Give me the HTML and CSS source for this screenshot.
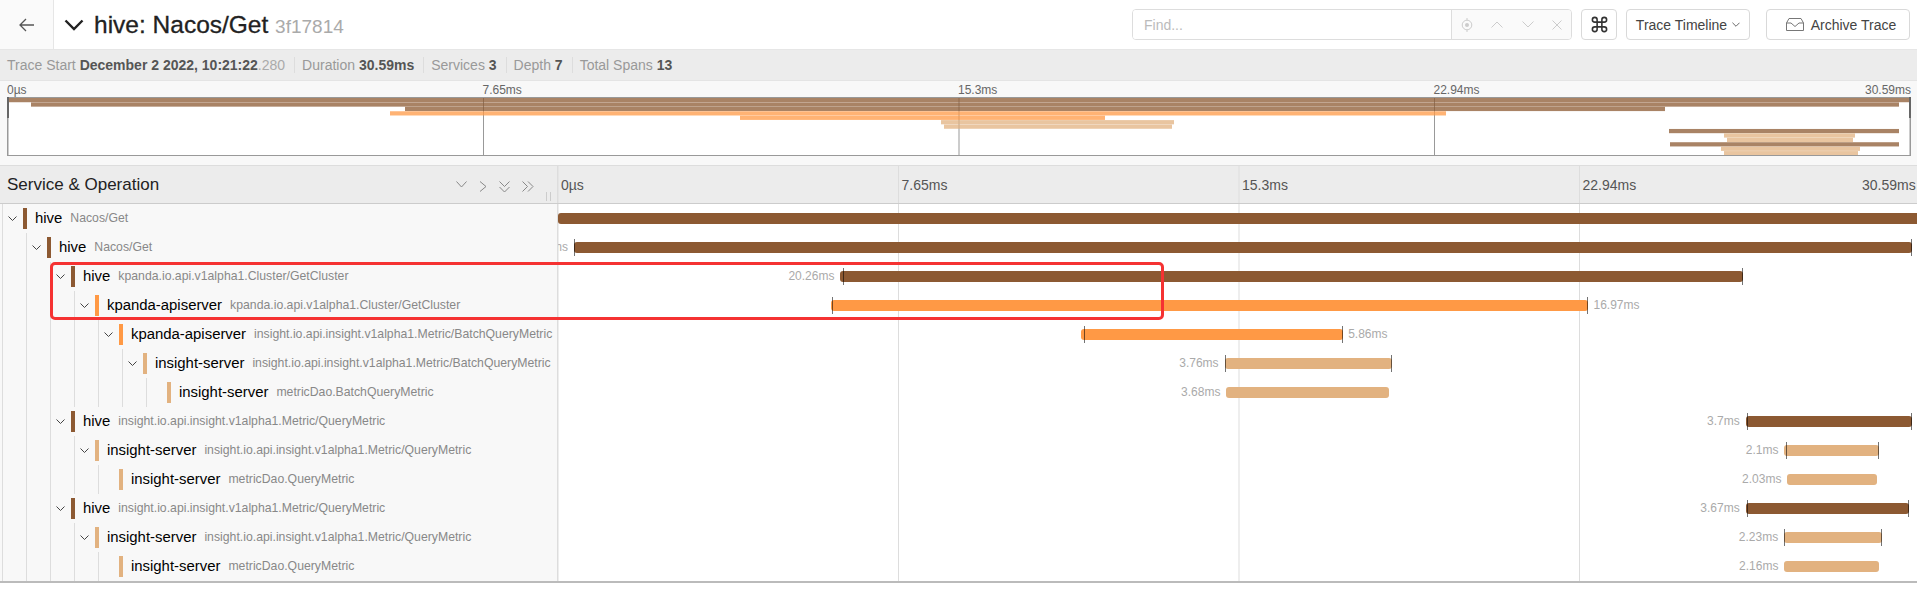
FILE: index.html
```html
<!DOCTYPE html>
<html lang="en">
<head>
  <meta charset="UTF-8" />
  <meta name="viewport" content="width=device-width, initial-scale=1.0" />
  <title>hive: Nacos/Get</title>
  <link rel="stylesheet" href="styles.css">
</head>
<body>
  <svg class="defs" width="0" height="0">
    <symbol id="chev" viewBox="0 0 9 5"><path d="M.5.5 4.5 4.5 8.5.5" fill="none" stroke="currentColor" stroke-width="1"/></symbol>
  </svg>

  <header id="topbar">
    <a class="back-btn">
      <svg width="16" height="14" viewBox="0 0 16 14"><path d="M7 1 1 7l6 6M1 7h14" fill="none" stroke="#555" stroke-width="1.3"/></svg>
    </a>
    <svg class="title-chev" width="20" height="12" viewBox="0 0 20 12"><path d="M1.5 1.5 10 10l8.5-8.5" fill="none" stroke="#222" stroke-width="2.4"/></svg>
    <h1 class="trace-title">hive: Nacos/Get <small>3f17814</small></h1>

    <div class="find-group">
      <input class="find-input" placeholder="Find...">
      <div class="find-icons">
        <svg width="12" height="16" viewBox="0 0 12 16"><circle cx="6" cy="8" r="4.8" fill="none" stroke="#ccc"/><circle cx="6" cy="8" r="2" fill="#ccc"/><path d="M6 1v2M6 13v2" stroke="#ccc"/></svg>
        <svg width="12" height="7" viewBox="0 0 12 7"><path d="M.5 6.5 6 1l5.500 5.500" fill="none" stroke="#ccc"/></svg>
        <svg width="12" height="7" viewBox="0 0 12 7"><path d="M.5.5 6 6 11.500.5" fill="none" stroke="#ccc"/></svg>
        <svg width="10" height="10" viewBox="0 0 10 10"><path d="M.5.5l9 9M9.500.5l-9 9" fill="none" stroke="#ccc"/></svg>
      </div>
    </div>
    <button class="btn cmd-btn">
      <svg width="19" height="19" viewBox="0 0 24 24"><path d="M18 3a3 3 0 0 0-3 3v12a3 3 0 0 0 3 3 3 3 0 0 0 3-3 3 3 0 0 0-3-3H6a3 3 0 0 0-3 3 3 3 0 0 0 3 3 3 3 0 0 0 3-3V6a3 3 0 0 0-3-3 3 3 0 0 0-3 3 3 3 0 0 0 3 3h12a3 3 0 0 0 3-3 3 3 0 0 0-3-3z" fill="none" stroke="#333" stroke-width="2"/></svg>
    </button>
    <button class="btn view-btn">Trace Timeline
      <svg width="8" height="5" class="view-chev"><use href="#chev"/></svg>
    </button>
    <button class="btn archive-btn">
      <svg width="18" height="13" viewBox="0 0 18 13"><path d="M3 .5H15L17.500 5V12.500H.5V5ZM.5 5H5L9 8.500 13 5H17.500" fill="none" stroke="#777"/></svg>
      Archive Trace
    </button>
  </header>

  <div id="meta-bar">
    <span class="meta-item">Trace Start <b>December 2 2022, 10:21:22</b><span class="ms">.280</span></span>
    <span class="meta-item">Duration <b>30.59ms</b></span>
    <span class="meta-item">Services <b>3</b></span>
    <span class="meta-item">Depth <b>7</b></span>
    <span class="meta-item">Total Spans <b>13</b></span>
  </div>

  <section id="minimap">
    <div class="mini-ticks">
      <span>0µs</span><span>7.65ms</span><span>15.3ms</span><span>22.94ms</span><span class="last">30.59ms</span>
    </div>
    <div class="mini-canvas">
      <svg width="100%" height="100%" viewBox="0 0 1902 58" preserveAspectRatio="none">
        <g class="mini-bars">
          <rect class="c-hive" x="0" y="0" width="1902" height="4.300"/>
          <rect class="c-hive" x="23" y="4.500" width="1868" height="4.300"/>
          <rect class="c-hive" x="397" y="9" width="1260" height="4.300"/>
          <rect class="c-kpanda" x="382" y="13.500" width="1056" height="4.300"/>
          <rect class="c-kpanda" x="732" y="18" width="365" height="4.300"/>
          <rect class="c-insight" x="933" y="22.500" width="233" height="4.300"/>
          <rect class="c-insight" x="936" y="27" width="228" height="4.300"/>
          <rect class="c-hive" x="1661" y="31.500" width="230" height="4.300"/>
          <rect class="c-insight" x="1716" y="36" width="131" height="4.300"/>
          <rect class="c-insight" x="1719" y="40.500" width="126" height="4.300"/>
          <rect class="c-hive" x="1662" y="45" width="229" height="4.300"/>
          <rect class="c-insight" x="1713" y="49.500" width="139" height="4.300"/>
          <rect class="c-insight" x="1716" y="54" width="134" height="4"/>
        </g>
      </svg>
      <i class="handle handle-left"></i>
      <i class="handle handle-right"></i>
    </div>
  </section>

  <main id="trace">
    <div class="table-head">
      <div class="name-col head-name">
        <span>Service &amp; Operation</span>
        <div class="collapse-icons">
          <svg width="11" height="7" viewBox="0 0 11 7"><path d="M.5.5l5 5.500 5-5.500" fill="none" stroke="#888"/></svg>
          <svg width="8" height="11" viewBox="0 0 8 11"><path d="M1 .5l6 5-6 5" fill="none" stroke="#888"/></svg>
          <svg width="11" height="12" viewBox="0 0 11 12"><path d="M.5.5l5 5 5-5M.5 6l5 5 5-5" fill="none" stroke="#888"/></svg>
          <svg width="12" height="11" viewBox="0 0 12 11"><path d="M.5.5l5 5-5 5M6 .5l5 5-5 5" fill="none" stroke="#888"/></svg>
        </div>
        <i class="drag-grip"></i>
      </div>
      <div class="time-col head-ticks">
        <span>0µs</span><span>7.65ms</span><span>15.3ms</span><span>22.94ms</span><span class="last">30.59ms</span>
      </div>
    </div>

    <div class="rows">
      <div class="row">
        <div class="name-col">
          <i class="guide last"><svg class="chev" width="9" height="5"><use href="#chev"/></svg></i>
          <i class="svc-mark c-hive"></i><span class="svc">hive</span><span class="op">Nacos/Get</span>
        </div>
        <div class="time-col"><div class="track">
          <div class="bar c-hive" style="left:0;width:100%"><i class="tick" style="left:-1px"></i></div>
        </div></div>
      </div>

      <div class="row">
        <div class="name-col">
          <i class="guide"></i><i class="guide last"><svg class="chev" width="9" height="5"><use href="#chev"/></svg></i>
          <i class="svc-mark c-hive"></i><span class="svc">hive</span><span class="op">Nacos/Get</span>
        </div>
        <div class="time-col"><div class="track">
          <div class="bar c-hive" style="left:1.17%;width:98.21%"><span class="dur before">30.2ms</span><i class="tick" style="left:0"></i><i class="tick end"></i></div>
        </div></div>
      </div>

      <div class="row">
        <div class="name-col">
          <i class="guide"></i><i class="guide"></i><i class="guide last"><svg class="chev" width="9" height="5"><use href="#chev"/></svg></i>
          <i class="svc-mark c-hive"></i><span class="svc">hive</span><span class="op">kpanda.io.api.v1alpha1.Cluster/GetCluster</span>
        </div>
        <div class="time-col"><div class="track">
          <div class="bar c-hive" style="left:20.74%;width:66.23%"><span class="dur before">20.26ms</span><i class="tick" style="left:3px"></i><i class="tick end"></i></div>
        </div></div>
      </div>

      <div class="row">
        <div class="name-col">
          <i class="guide"></i><i class="guide"></i><i class="guide"></i><i class="guide last"><svg class="chev" width="9" height="5"><use href="#chev"/></svg></i>
          <i class="svc-mark c-kpanda"></i><span class="svc">kpanda-apiserver</span><span class="op">kpanda.io.api.v1alpha1.Cluster/GetCluster</span>
        </div>
        <div class="time-col"><div class="track">
          <div class="bar c-kpanda" style="left:20.04%;width:55.62%"><i class="tick" style="left:1px"></i><i class="tick end"></i><span class="dur after">16.97ms</span></div>
        </div></div>
      </div>

      <div class="row">
        <div class="name-col">
          <i class="guide"></i><i class="guide"></i><i class="guide"></i><i class="guide"></i><i class="guide last"><svg class="chev" width="9" height="5"><use href="#chev"/></svg></i>
          <i class="svc-mark c-kpanda"></i><span class="svc">kpanda-apiserver</span><span class="op">insight.io.api.insight.v1alpha1.Metric/BatchQueryMetric</span>
        </div>
        <div class="time-col"><div class="track">
          <div class="bar c-kpanda" style="left:38.37%;width:19.28%"><i class="tick" style="left:3px"></i><i class="tick end"></i><span class="dur after">5.86ms</span></div>
        </div></div>
      </div>

      <div class="row">
        <div class="name-col">
          <i class="guide"></i><i class="guide"></i><i class="guide"></i><i class="guide"></i><i class="guide"></i><i class="guide last"><svg class="chev" width="9" height="5"><use href="#chev"/></svg></i>
          <i class="svc-mark c-insight"></i><span class="svc">insight-server</span><span class="op">insight.io.api.insight.v1alpha1.Metric/BatchQueryMetric</span>
        </div>
        <div class="time-col"><div class="track">
          <div class="bar c-insight" style="left:48.94%;width:12.3%"><span class="dur before">3.76ms</span><i class="tick" style="left:0"></i><i class="tick end"></i></div>
        </div></div>
      </div>

      <div class="row">
        <div class="name-col">
          <i class="guide"></i><i class="guide"></i><i class="guide"></i><i class="guide"></i><i class="guide"></i><i class="guide"></i><i class="guide last"></i>
          <i class="svc-mark c-insight"></i><span class="svc">insight-server</span><span class="op">metricDao.BatchQueryMetric</span>
        </div>
        <div class="time-col"><div class="track">
          <div class="bar c-insight" style="left:49.08%;width:11.96%"><span class="dur before">3.68ms</span></div>
        </div></div>
      </div>

      <div class="row">
        <div class="name-col">
          <i class="guide"></i><i class="guide"></i><i class="guide last"><svg class="chev" width="9" height="5"><use href="#chev"/></svg></i>
          <i class="svc-mark c-hive"></i><span class="svc">hive</span><span class="op">insight.io.api.insight.v1alpha1.Metric/QueryMetric</span>
        </div>
        <div class="time-col"><div class="track">
          <div class="bar c-hive" style="left:87.2%;width:12.18%"><span class="dur before">3.7ms</span><i class="tick" style="left:1px"></i><i class="tick end"></i></div>
        </div></div>
      </div>

      <div class="row">
        <div class="name-col">
          <i class="guide"></i><i class="guide"></i><i class="guide"></i><i class="guide last"><svg class="chev" width="9" height="5"><use href="#chev"/></svg></i>
          <i class="svc-mark c-insight"></i><span class="svc">insight-server</span><span class="op">insight.io.api.insight.v1alpha1.Metric/QueryMetric</span>
        </div>
        <div class="time-col"><div class="track">
          <div class="bar c-insight" style="left:90.05%;width:6.91%"><span class="dur before">2.1ms</span><i class="tick" style="left:2px"></i><i class="tick end"></i></div>
        </div></div>
      </div>

      <div class="row">
        <div class="name-col">
          <i class="guide"></i><i class="guide"></i><i class="guide"></i><i class="guide"></i><i class="guide last"></i>
          <i class="svc-mark c-insight"></i><span class="svc">insight-server</span><span class="op">metricDao.QueryMetric</span>
        </div>
        <div class="time-col"><div class="track">
          <div class="bar c-insight" style="left:90.27%;width:6.59%"><span class="dur before">2.03ms</span></div>
        </div></div>
      </div>

      <div class="row">
        <div class="name-col">
          <i class="guide"></i><i class="guide"></i><i class="guide last"><svg class="chev" width="9" height="5"><use href="#chev"/></svg></i>
          <i class="svc-mark c-hive"></i><span class="svc">hive</span><span class="op">insight.io.api.insight.v1alpha1.Metric/QueryMetric</span>
        </div>
        <div class="time-col"><div class="track">
          <div class="bar c-hive" style="left:87.2%;width:12.01%"><span class="dur before">3.67ms</span><i class="tick" style="left:1px"></i><i class="tick end"></i></div>
        </div></div>
      </div>

      <div class="row">
        <div class="name-col">
          <i class="guide"></i><i class="guide"></i><i class="guide"></i><i class="guide last"><svg class="chev" width="9" height="5"><use href="#chev"/></svg></i>
          <i class="svc-mark c-insight"></i><span class="svc">insight-server</span><span class="op">insight.io.api.insight.v1alpha1.Metric/QueryMetric</span>
        </div>
        <div class="time-col"><div class="track">
          <div class="bar c-insight" style="left:90.03%;width:7.2%"><span class="dur before">2.23ms</span><i class="tick" style="left:0"></i><i class="tick end"></i></div>
        </div></div>
      </div>

      <div class="row">
        <div class="name-col">
          <i class="guide"></i><i class="guide"></i><i class="guide"></i><i class="guide"></i><i class="guide last"></i>
          <i class="svc-mark c-insight"></i><span class="svc">insight-server</span><span class="op">metricDao.QueryMetric</span>
        </div>
        <div class="time-col"><div class="track">
          <div class="bar c-insight" style="left:90.05%;width:6.94%"><span class="dur before">2.16ms</span></div>
        </div></div>
      </div>
    </div>

    <div class="highlight-box"></div>
  </main>
</body>
</html>
```

FILE: styles.css
```css
* {
  box-sizing: border-box;
}

html,
body {
  margin: 0;
  height: 100%;
  overflow: hidden;
  background-color: #fff;
  font-family: "Liberation Sans", Arial, sans-serif;
  color: #111;
}

.defs {
  position: absolute;
}

/* colours per service */
.c-hive { background-color: #8c5932; fill: #8c5932; }
.c-kpanda { background-color: #ff9945; fill: #ff9945; }
.c-insight { background-color: #e2b280; fill: #e2b280; }

/* top bar */
#topbar {
  display: flex;
  align-items: center;
  height: 50px;
  border-bottom: 1px solid #e6e6e6;
  padding-right: 7px;
}

.back-btn {
  display: flex;
  align-items: center;
  justify-content: center;
  width: 54px;
  height: 49px;
  border-right: 1px solid #e6e6e6;
  background-color: #fafafa;
}

.title-chev {
  margin-left: 10px;
  margin-right: 10px;
}

.trace-title {
  margin: 0;
  font-size: 24.500px;
  font-weight: 400;
  color: #222;
  -webkit-text-stroke: 0.3px #222;
  white-space: nowrap;
}

.trace-title small {
  font-size: 19px;
  color: #aaa;
  -webkit-text-stroke: 0;
}

.find-group {
  display: flex;
  width: 440px;
  height: 31px;
  margin-left: auto;
  border: 1px solid #ddd;
  border-radius: 4px;
  overflow: hidden;
}

.find-input {
  width: 319px;
  border: 0;
  border-right: 1px solid #ddd;
  padding: 0 11px;
  font-family: inherit;
  font-size: 14px;
  outline: none;
}

.find-input::placeholder {
  color: #bbb;
}

.find-icons {
  flex: 1;
  display: flex;
  align-items: center;
  justify-content: space-between;
  padding: 0 9px;
  background-color: #fafafa;
}

.btn {
  display: flex;
  align-items: center;
  justify-content: center;
  height: 31px;
  margin-left: 9px;
  padding: 0;
  border: 1px solid #d9d9d9;
  border-radius: 4px;
  background-color: #fff;
  font-family: inherit;
  font-size: 14px;
  color: #444;
}

.cmd-btn {
  width: 36px;
}

.view-btn {
  width: 124px;
}

.view-chev {
  margin-left: 5px;
  color: #555;
}

.archive-btn {
  width: 144px;
  margin-left: 16px;
  padding-left: 6px;
  gap: 7px;
}

/* summary line */
#meta-bar {
  display: flex;
  align-items: center;
  height: 31px;
  padding-left: 7px;
  background-color: #ececec;
  border-bottom: 1px solid #e4e4e4;
  font-size: 14px;
  color: #999;
}

.meta-item {
  padding-right: 9px;
  margin-right: 7px;
  border-right: 1px solid #ddd;
  line-height: 16px;
  white-space: nowrap;
}

.meta-item:last-child {
  border-right: 0;
}

.meta-item b {
  color: #555;
}

.meta-item .ms {
  color: #aaa;
}

/* minimap */
#minimap {
  height: 85px;
  padding: 0 7px;
  background-color: #f8f8f8;
  border-bottom: 1px solid #ddd;
}

.mini-ticks {
  display: flex;
  height: 16px;
  padding-top: 2px;
  font-size: 12px;
  line-height: 14px;
  color: #666;
}

.mini-ticks span {
  width: 475.500px;
  flex: none;
}

.mini-ticks span.last {
  width: auto;
  margin-left: -44px;
}

.mini-canvas {
  position: relative;
  width: 1904px;
  height: 59px;
  border: 1px solid #999;
  background-color: #fff;
  background-image: linear-gradient(to right, #999 1px, transparent 1px);
  background-size: 475.500px 100%;
  background-position: 475px 0;
}

.mini-canvas svg {
  display: block;
}

.mini-bars {
  fill-opacity: 0.75;
}

.handle {
  position: absolute;
  top: -1px;
  width: 2px;
  height: 21px;
  background-color: #666;
}

.handle-left {
  left: -1px;
}

.handle-right {
  right: -1px;
}

/* table */
#trace {
  position: relative;
}

.table-head {
  display: flex;
  height: 38px;
  background-color: #ececec;
  border-bottom: 1px solid #ccc;
}

.name-col {
  position: relative;
  display: flex;
  align-items: center;
  flex: none;
  width: 558px;
  padding-left: 2px;
  border-right: 1px solid #ddd;
  white-space: nowrap;
  overflow: hidden;
}

.head-name {
  padding-left: 7px;
  padding-top: 1px;
  font-size: 17px;
  color: #222;
}

.collapse-icons {
  position: absolute;
  left: 456px;
  top: 15px;
  display: flex;
  align-items: flex-start;
  gap: 12px;
}

.drag-grip {
  position: absolute;
  left: 546px;
  top: 26px;
  width: 5px;
  height: 9px;
  border-left: 1px solid #ccc;
  border-right: 1px solid #ccc;
}

.time-col {
  flex: 1;
  min-width: 0;
  overflow: hidden;
}

.head-ticks {
  display: flex;
  font-size: 14px;
  line-height: 38px;
  color: #555;
  background-image: linear-gradient(to right, #ddd 1px, transparent 1px);
  background-size: 340.500px 100%;
  background-position: 340px 0;
}

.head-ticks span {
  flex: none;
  width: 340.500px;
  padding-left: 3px;
}

.head-ticks span.last {
  width: auto;
  margin-left: -58px;
  padding-left: 0;
}

.rows {
  border-bottom: 2px solid #bbb;
}

.row {
  display: flex;
  height: 29px;
}

.row .name-col {
  background-color: #f8f8f8;
  align-items: stretch;
}

.row .time-col {
  background-image: linear-gradient(to right, #ddd 1px, transparent 1px);
  background-size: 340.500px 100%;
  background-position: 340px 0;
}

.track {
  position: relative;
  width: 1362px;
  height: 100%;
}

.bar {
  position: absolute;
  top: 9px;
  height: 11px;
  border-radius: 3px;
}

.tick {
  position: absolute;
  top: -3px;
  width: 1px;
  height: 17px;
  background-color: rgba(0, 0, 0, 0.55);
}

.tick.end {
  right: 0;
}

.dur {
  position: absolute;
  top: -2px;
  font-size: 12px;
  line-height: 15px;
  color: #aaa;
  white-space: nowrap;
}

.dur.before {
  right: 100%;
  margin-right: 6px;
}

.dur.after {
  left: 100%;
  margin-left: 5px;
}

/* one guide for each tree level */
.guide {
  display: flex;
  align-items: center;
  flex: none;
  width: 24px;
  border-left: 1px solid #ddd;
}

.guide.last {
  width: 21px;
}

.chev {
  margin-left: 5px;
  color: #444;
}

.svc-mark {
  flex: none;
  align-self: center;
  width: 4px;
  height: 21px;
}

.svc {
  margin-left: 8px;
  font-size: 14.900px;
  line-height: 29px;
  color: #000;
}

.op {
  margin-left: 8px;
  font-size: 12.250px;
  line-height: 29px;
  color: #888;
}

.highlight-box {
  position: absolute;
  left: 50px;
  top: 96px;
  width: 1114px;
  height: 58px;
  border: 3px solid #f53232;
  border-radius: 5px;
}
```
